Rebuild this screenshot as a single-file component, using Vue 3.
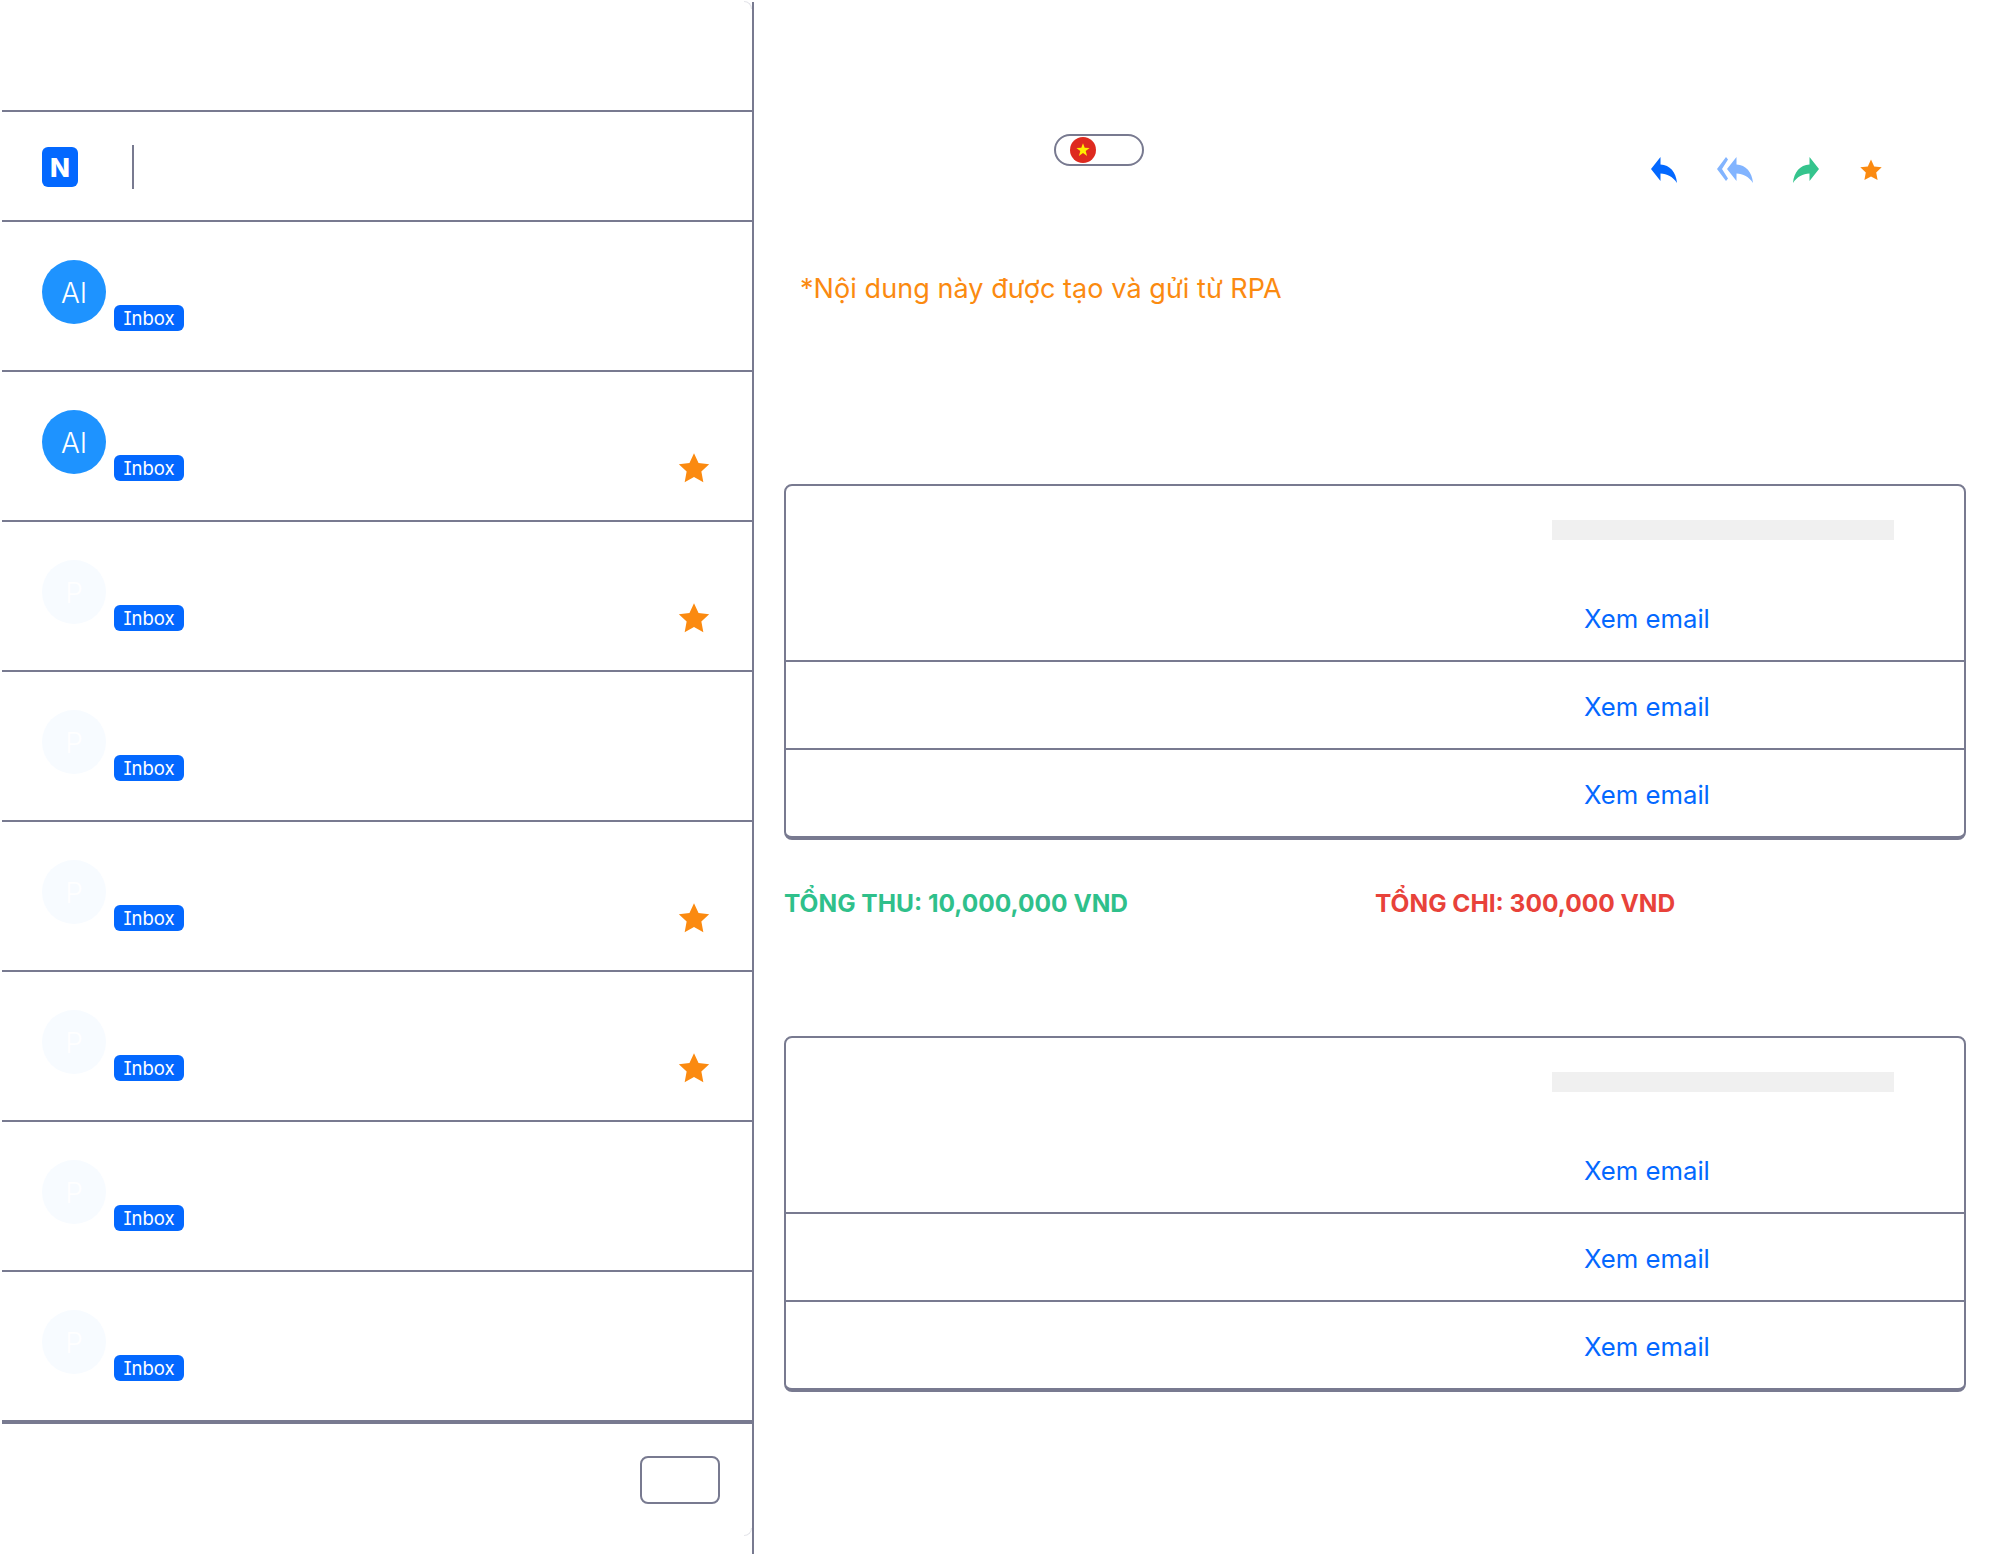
<script setup>
const rows = [
  { initials: 'AI', strong: true, star: false },
  { initials: 'AI', strong: true, star: true },
  { initials: 'P', strong: false, star: true },
  { initials: 'P', strong: false, star: false },
  { initials: 'P', strong: false, star: true },
  { initials: 'P', strong: false, star: true },
  { initials: 'P', strong: false, star: false },
  { initials: 'P', strong: false, star: false },
]
const tables = [0, 1]
const starPath = 'M12 1.5l3.2 6.9 7.5.9-5.5 5.2 1.4 7.5L12 18.4l-6.6 3.6 1.4-7.5L1.3 9.3l7.5-.9z'
</script>

<template>
  <div class="page">
    <aside class="sidebar">
      <span class="arc arc-top"></span>
      <span class="arc arc-bottom"></span>
      <div class="top"></div>
      <div class="brand">
        <div class="logo">N</div>
        <div class="divider"></div>
      </div>
      <div class="list">
        <div v-for="(row, i) in rows" :key="i" class="row">
          <div class="avatar" :class="{ strong: row.strong }">{{ row.initials }}</div>
          <span class="badge">Inbox</span>
          <svg v-if="row.star" class="row-star" viewBox="0 0 24 24"><path :d="starPath" /></svg>
        </div>
      </div>
      <div class="foot"><div class="foot-btn"></div></div>
    </aside>

    <main class="content">
      <div class="head">
        <div class="pill">
          <svg class="flag" viewBox="0 0 26 26">
            <circle cx="13" cy="13" r="13" fill="#de2a1f" />
            <path d="M13 6.200l1.700 4.600 4.900.2-3.900 3 1.400 4.900-4.100-2.800-4.100 2.800 1.400-4.900-3.900-3 4.900-.2z" fill="#ffee00" />
          </svg>
        </div>
        <div class="actions">
          <svg class="act reply" viewBox="0 0 26 26"><path d="M9.500 0L0 12l9.500 12v-7.500C16 16.500 22 20 26 26 25 15 19 8 9.500 7.500z" /></svg>
          <svg class="act reply-all" viewBox="0 0 36 26">
            <path d="M9 0L0 12l9 12 2-2.500L5 12l6-9.500z" />
            <path d="M19.500 0L10 12l9.500 12v-7.500C26 16.500 32 20 36 26 35 15 29 8 19.500 7.500z" />
          </svg>
          <svg class="act forward" viewBox="0 0 26 26"><path d="M16.500 0L26 12l-9.500 12v-7.500C10 16.500 4 20 0 26 1 15 7 8 16.500 7.500z" /></svg>
          <svg class="act star" viewBox="0 0 24 24"><path :d="starPath" /></svg>
        </div>
      </div>

      <p class="note">*Nội dung này được tạo và gửi từ RPA</p>

      <section v-for="t in tables" :key="t" class="block">
        <div class="table">
          <div class="tr first">
            <div class="bar"></div>
            <a class="link">Xem email</a>
          </div>
          <div class="tr"><a class="link">Xem email</a></div>
          <div class="tr"><a class="link">Xem email</a></div>
        </div>
        <div v-if="t === 0" class="totals">
          <span class="income">TỔNG THU: 10,000,000 VND</span>
          <span class="expense">TỔNG CHI: 300,000 VND</span>
        </div>
      </section>
    </main>
  </div>
</template>

<style>
html, body { margin: 0; background: #fff; }
</style>

<style scoped>
.page {
  width: 2000px;
  height: 1554px;
  display: flex;
  overflow: hidden;
  background: #fff;
  font-family: Inter, "Liberation Sans", sans-serif;
}
.sidebar {
  position: relative;
  box-sizing: border-box;
  width: 754px;
  margin-top: 2px;
  padding-left: 2px;
  border-right: 2px solid #787a90;
}
.arc {
  position: absolute;
  right: 0;
  width: 8px;
  height: 8px;
  border: 1px solid #e4e5ea;
  border-left: 0;
  box-sizing: border-box;
}
.arc-top { top: -1px; border-bottom: 0; border-top-right-radius: 8px; }
.arc-bottom { top: 1526px; border-top: 0; border-bottom-right-radius: 8px; }
.top {
  height: 108px;
  border-bottom: 2px solid #787a90;
}
.brand {
  box-sizing: border-box;
  height: 110px;
  padding: 2px 0 0 40px;
  border-bottom: 2px solid #787a90;
  display: flex;
  align-items: center;
  gap: 54px;
}
.logo {
  width: 36px;
  height: 40px;
  border-radius: 6px;
  background: #0368ff;
  color: #fff;
  display: flex;
  align-items: center;
  justify-content: center;
  font-weight: 800;
  font-size: 26px;
}
.divider {
  width: 2px;
  height: 44px;
  background: #787a90;
}
.row {
  box-sizing: border-box;
  height: 150px;
  border-bottom: 2px solid #787a90;
  padding: 38px 41px 0 40px;
  display: flex;
  align-items: flex-start;
  position: relative;
}
.row:last-child {
  height: 152px;
  border-bottom-width: 4px;
}
.avatar {
  box-sizing: border-box;
  width: 64px;
  height: 64px;
  padding-top: 2px;
  border-radius: 50%;
  background: #f7fbff;
  color: #fff;
  font-size: 28px;
  font-weight: 350;
  display: flex;
  align-items: center;
  justify-content: center;
  flex: none;
}
.avatar.strong { background: #1e93ff; }
.badge {
  margin: 45px 0 0 8px;
  width: 70px;
  height: 26px;
  border-radius: 6px;
  background: #0368ff;
  color: #fff;
  font-feature-settings: "cv08";
  font-size: 18.5px;
  line-height: 27px;
  text-align: center;
}
.row-star {
  width: 34px;
  height: 34px;
  fill: #fb8a10;
  margin: 41px 0 0 auto;
}
.foot {
  display: flex;
  justify-content: flex-end;
  padding: 32px 32px 0 0;
}
.foot-btn {
  box-sizing: border-box;
  width: 80px;
  height: 48px;
  border: 2px solid #787a90;
  border-radius: 8px;
}
.content {
  flex: 1;
  min-width: 0;
  padding: 0 34px 0 30px;
}
.head {
  position: relative;
  height: 234px;
}
.pill {
  position: absolute;
  left: 270px;
  top: 134px;
  box-sizing: border-box;
  width: 90px;
  height: 32px;
  border: 2px solid #787a90;
  border-radius: 16px;
  padding: 1px 0 0 14px;
}
.flag { display: block; width: 26px; height: 26px; }
.actions {
  position: absolute;
  left: 867px;
  top: 157px;
  display: flex;
  align-items: center;
}
.act { display: block; }
.reply { width: 26px; height: 26px; fill: #0368ff; margin-right: 40px; }
.reply-all { width: 36px; height: 26px; fill: #82b4ff; margin-right: 40px; }
.forward { width: 26px; height: 26px; fill: #35c48d; margin-right: 40px; }
.star { width: 24px; height: 24px; fill: #fb8a10; }
.note {
  margin: 0 0 0 16px;
  height: 250px;
  padding-top: 38px;
  box-sizing: border-box;
  color: #fb8a10;
  font-size: 27px;
  letter-spacing: 0.07px;
  line-height: 34px;
}
.block { display: block; }
.table {
  box-sizing: border-box;
  border: 2px solid #787a90;
  border-bottom-width: 4px;
  border-radius: 8px;
}
.tr {
  box-sizing: border-box;
  height: 88px;
  border-top: 2px solid #787a90;
  padding: 4px 0 0 798px;
  display: flex;
  align-items: center;
}
.tr.first {
  height: 174px;
  border-top: 0;
  display: block;
  padding-top: 34px;
}
.bar {
  width: 342px;
  height: 20px;
  margin-left: -32px;
  background: #f0f0f0;
}
.tr.first .link { display: block; margin-top: 62px; }
.link {
  color: #0368ff;
  font-size: 25.7px;
  line-height: 34px;
}
.totals {
  height: 196px;
  padding-top: 46px;
  box-sizing: border-box;
  display: flex;
  font-size: 24.5px;
  font-weight: 700;
  line-height: 34px;
}
.income { color: #2fc08b; width: 591px; }
.expense { color: #e8423a; }
</style>
